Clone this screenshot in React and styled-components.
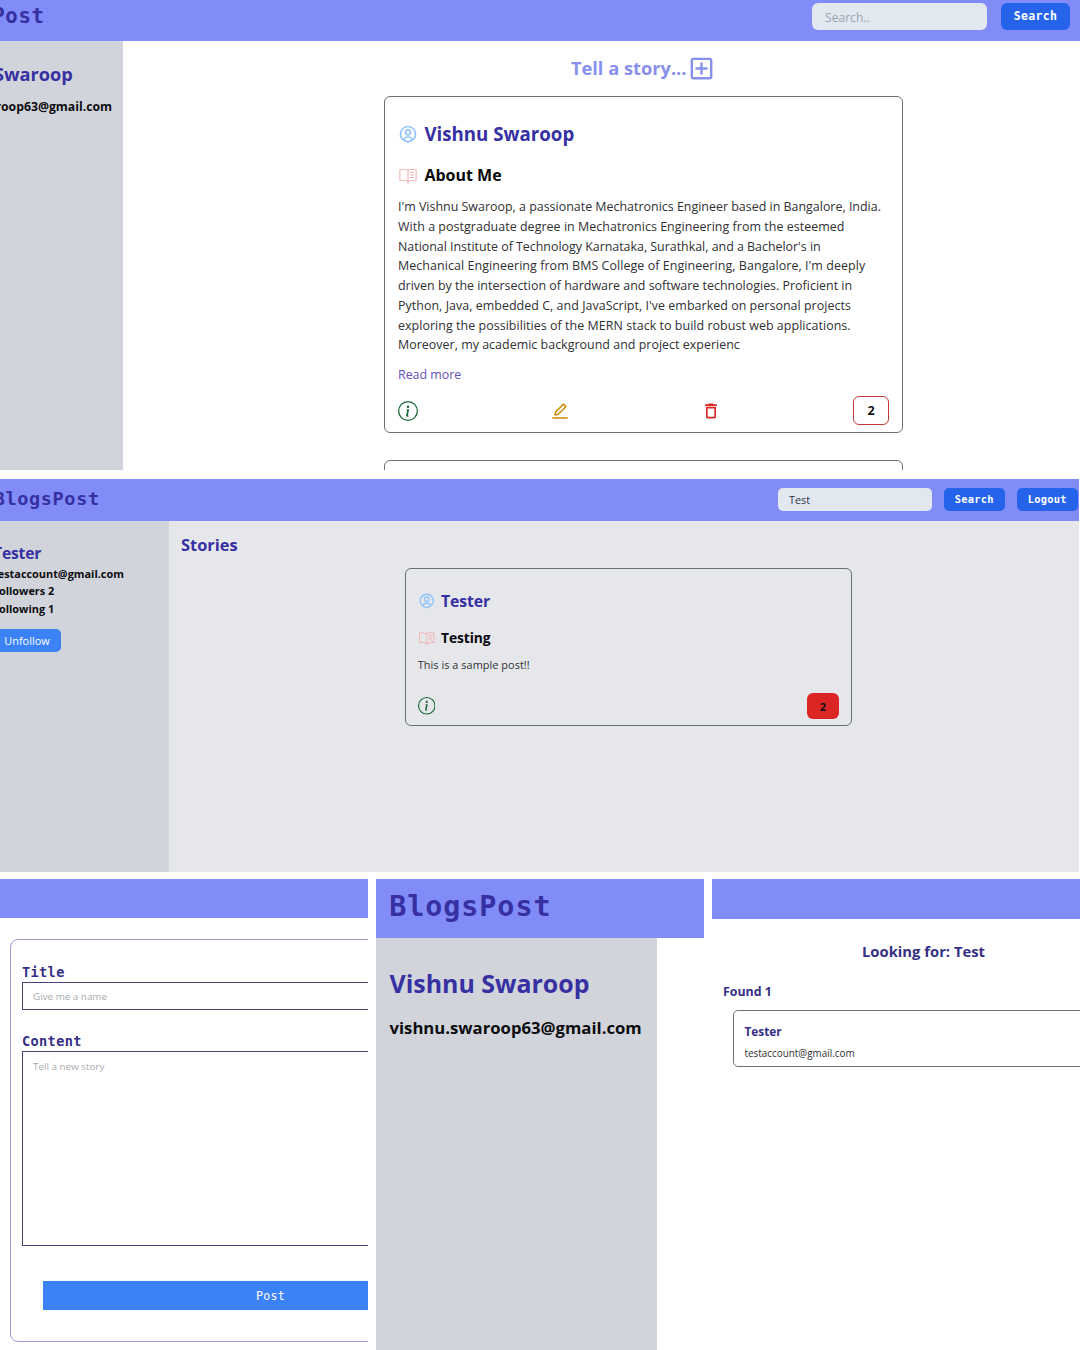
import React from "react";
import styled, { createGlobalStyle, css } from "styled-components";
import { BiUserCircle } from "react-icons/bi";
import { PiBookOpenTextLight } from "react-icons/pi";
import { BsInfoCircle } from "react-icons/bs";
import { AiOutlineEdit } from "react-icons/ai";
import { MdOutlineAddBox, MdOutlineDelete } from "react-icons/md";

const sans = `"Open Sans", "Noto Sans", sans-serif`;
const mono = `"DejaVu Sans Mono", "Liberation Mono", monospace`;

const color = {
  bar: "#818cf8",
  indigo: "#3730a3",
  indigoDark: "#352f85",
  side: "#d1d5db",
  pane: "#e5e7eb",
  blue: "#3b82f6",
  blueDark: "#2563eb",
  line: "#6b7078",
};

const GlobalStyle = createGlobalStyle`
  * { box-sizing: border-box; }
  body { margin: 0; background: #fff; font-family: ${sans}; }
  button, input, textarea { font: inherit; margin: 0; }
`;

const Page = styled.div`
  width: 1080px;
  height: 1350px;
  overflow: hidden;
  display: grid;
  grid-template-rows: 470px 393px 471px;
  row-gap: 9px;
  background: #fff;
`;

const Panel = styled.section`
  display: flex;
  flex-direction: column;
  overflow: hidden;
  min-width: 0;
  width: ${(p) => p.$width || "auto"};
  background: ${(p) => p.$bg || "#fff"};
`;

const BottomRow = styled.div`
  display: grid;
  grid-template-columns: 368px 328px 368px;
  column-gap: 8px;
  margin-top: -2px;
`;

const Bar = styled.header`
  flex: none;
  display: flex;
  align-items: center;
  height: ${(p) => p.$height}px;
  padding: ${(p) => p.$pad || "0"};
  background: ${color.bar};
`;

const Logo = styled.h1`
  margin: 0 auto 0 ${(p) => p.$left}px;
  font: 700 ${(p) => p.$size}px/1 ${mono};
  letter-spacing: ${(p) => p.$spacing}px;
  color: ${color.indigo};
`;

const SearchInput = styled.input`
  width: ${(p) => p.$w}px;
  height: ${(p) => p.$h}px;
  padding: ${(p) => p.$padTop || 0}px ${(p) => p.$padX}px 0;
  border: 0;
  border-radius: ${(p) => p.$radius}px;
  background: #e2e8f0;
  color: #30343c;
  font-size: ${(p) => p.$size}px;
  &::placeholder { color: #9ca3af; opacity: 1; }
`;

const BarButton = styled.button`
  width: ${(p) => p.$w}px;
  height: ${(p) => p.$h}px;
  margin-left: ${(p) => p.$gap}px;
  padding: 0;
  border: 0;
  border-radius: ${(p) => p.$radius}px;
  background: ${color.blueDark};
  color: #fff;
  font: 700 ${(p) => p.$size}px/1 ${mono};
  letter-spacing: ${(p) => p.$spacing || 0}px;
`;

const Body = styled.div`
  flex: 1;
  display: flex;
  min-height: 0;
`;

const Sidebar = styled.aside`
  flex: none;
  width: ${(p) => p.$w}px;
  margin-left: ${(p) => p.$shift || 0}px;
  padding: ${(p) => p.$pad};
  background: ${color.side};
  white-space: nowrap;
`;

const Name = styled.h2`
  margin: 0;
  font-size: ${(p) => p.$size}px;
  line-height: ${(p) => p.$lh}px;
  font-weight: 700;
  letter-spacing: ${(p) => p.$spacing || 0}px;
  color: ${(p) => p.$color || color.indigo};
`;

const Detail = styled.p`
  margin: 0;
  font-size: ${(p) => p.$size}px;
  line-height: ${(p) => p.$lh}px;
  font-weight: 700;
  color: #0c0c0f;
`;

const FollowButton = styled.button`
  display: block;
  width: 68px;
  height: 23px;
  margin-top: 11.5px;
  padding: 0;
  border: 0;
  border-radius: 5px;
  background: ${color.blue};
  color: #fff;
  font-size: 10.9px;
  line-height: 23px;
`;

const Main = styled.main`
  flex: none;
  display: flex;
  flex-direction: column;
  align-items: center;
  width: ${(p) => p.$w}px;
  background: ${(p) => p.$bg || "#fff"};
`;

const StoryLink = styled.a`
  display: flex;
  align-items: center;
  height: 30px;
  margin: 13px 0 13.5px;
  color: #8890ee;
  font-size: 18.25px;
  font-weight: 700;
  line-height: 28px;
  svg { margin-left: 0.5px; }
`;

const StoriesTitle = styled.h2`
  align-self: flex-start;
  margin: 11px 0 11px 12px;
  font-size: 16.4px;
  line-height: 25px;
  font-weight: 700;
  color: ${color.indigo};
`;

const Card = styled.article`
  flex: none;
  display: flex;
  flex-direction: column;
  width: ${(p) => p.$w}px;
  height: ${(p) => p.$h}px;
  padding: ${(p) => p.$pad || "0"};
  border: 1.5px solid ${color.line};
  border-radius: 6px;
  & + & { margin-top: 27px; }
`;

const IconLine = styled.div`
  display: flex;
  align-items: center;
  gap: ${(p) => p.$gap}px;
  height: ${(p) => p.$h}px;
  margin-bottom: ${(p) => p.$mb || 0}px;
  svg { flex: none; }
`;

const Excerpt = styled.p`
  margin: 0;
  font-size: ${(p) => p.$size}px;
  line-height: ${(p) => p.$lh}px;
  letter-spacing: ${(p) => p.$spacing || 0}px;
  color: #303034;
  white-space: nowrap;
`;

const Line = styled.span`
  display: block;
  letter-spacing: ${(p) => p.$tracking || 0}px;
`;

const ReadMore = styled.a`
  margin-top: 9.5px;
  font-size: 12.4px;
  line-height: 20px;
  color: #5f52b8;
`;

const Actions = styled.div`
  display: flex;
  align-items: center;
  justify-content: space-between;
  margin-top: auto;
`;

const Likes = styled.button`
  width: ${(p) => p.$w}px;
  height: ${(p) => p.$h}px;
  padding: 2px 0 0;
  border-radius: 6px;
  font-size: ${(p) => p.$size}px;
  font-weight: 700;
  line-height: 1;
  color: #111;
  ${(p) =>
    p.$liked
      ? css`border: 0; background: #dc2626;`
      : css`border: 1.5px solid #c53a3a; background: #fff;`}
`;

const Form = styled.form`
  display: flex;
  flex-direction: column;
  flex: none;
  width: 519px;
  height: 403px;
  margin: 21px 0 0 10px;
  padding: 22px 11px 0 11px;
  border: 1px solid #9a9ccf;
  border-radius: 8px;
`;

const Label = styled.label`
  font: 700 13.6px/20px ${mono};
  letter-spacing: 0.35px;
  color: ${color.indigoDark};
`;

const fieldStyle = css`
  display: block;
  width: 100%;
  border: 1px solid #4a4378;
  border-radius: 0;
  outline: 0;
  resize: none;
  font-size: 9.85px;
  background: #fff;
  &::placeholder { color: #a9abb0; opacity: 1; }
`;

const TextInput = styled.input`
  ${fieldStyle}
  height: 28px;
  margin-bottom: 21px;
  padding: 0 10px 1px;
`;

const TextArea = styled.textarea`
  ${fieldStyle}
  height: 195px;
  padding: 7px 10px;
  line-height: 15px;
`;

const PostButton = styled.button`
  height: 29px;
  margin: 35px 21px 0;
  padding: 1px 0 0 2px;
  border: 0;
  background: ${color.blue};
  color: #fff;
  font: 400 11.6px/28px ${mono};
  letter-spacing: 0.25px;
`;

const Results = styled.div`
  width: 423px;
  padding: 21px 0 0 11px;
`;

const ResultsTitle = styled.h2`
  margin: 0 11px 20px 0;
  text-align: center;
  font-size: 14.8px;
  line-height: 22px;
  color: ${color.indigoDark};
`;

const Found = styled.h3`
  margin: 0 0 8px;
  font-size: 12.4px;
  line-height: 20px;
  color: ${color.indigoDark};
`;

const ResultCard = styled.div`
  height: 57px;
  margin: 0 21px 0 10px;
  padding: 10px 11px 0 10.5px;
  border: 1px solid ${color.line};
  border-radius: 5px;
`;

function PostCard({ compact, author, title, lines, more, owner, likes, liked }) {
  const icon = compact ? 17.5 : 20;
  return (
    <Card
      $w={compact ? 447 : 519}
      $h={compact ? 158 : 337}
      $pad={compact ? "18px 12px 6px 12px" : "23px 13px 7px 13px"}
    >
      <IconLine $gap={compact ? 5.8 : 6.4} $h={28} $mb={compact ? 9 : 13}>
        <BiUserCircle size={icon} color="#93c5fd" />
        <Name $size={compact ? 15.8 : 18.7} $lh={28} $spacing={compact ? -0.1 : 0}>{author}</Name>
      </IconLine>
      <IconLine $gap={compact ? 5.8 : 6.4} $h={28} $mb={compact ? 4 : 8}>
        <PiBookOpenTextLight size={icon} color="#f5a9a9" />
        <Name $size={compact ? 13.8 : 16} $lh={28} $color="#08080a" $spacing={compact ? -0.08 : 0}>
          {title}
        </Name>
      </IconLine>
      <Excerpt $size={compact ? 10.9 : 12.44} $lh={compact ? 18 : 19.76}>
        {lines.map(([line, tracking]) => (
          <Line key={line} $tracking={tracking}>{line}</Line>
        ))}
      </Excerpt>
      {more && <ReadMore>Read more</ReadMore>}
      <Actions>
        <BsInfoCircle size={compact ? 17.5 : 20} color="#166534" />
        {owner && <AiOutlineEdit size={20} color="#ca8a04" />}
        {owner && <MdOutlineDelete size={20} color="#dc2626" />}
        <Likes
          $liked={liked}
          $w={compact ? 32 : 36}
          $h={compact ? 26 : 29}
          $size={compact ? 10.9 : 12.5}
        >
          {likes}
        </Likes>
      </Actions>
    </Card>
  );
}

const aboutLines = [
  ["I'm Vishnu Swaroop, a passionate Mechatronics Engineer based in Bangalore, India.", 0],
  ["With a postgraduate degree in Mechatronics Engineering from the esteemed", 0.045],
  ["National Institute of Technology Karnataka, Surathkal, and a Bachelor's in", -0.02],
  ["Mechanical Engineering from BMS College of Engineering, Bangalore, I'm deeply", 0.072],
  ["driven by the intersection of hardware and software technologies. Proficient in", 0],
  ["Python, Java, embedded C, and JavaScript, I've embarked on personal projects", 0.04],
  ["exploring the possibilities of the MERN stack to build robust web applications.", 0.05],
  ["Moreover, my academic background and project experienc", 0.02],
];

const sampleLines = [["This is a sample post!!", 0.05]];

function HomePanel() {
  return (
    <Panel>
      <Bar $height={40.5} $pad="0 10px 8px 0">
        <Logo $size={20.7} $spacing={0.68} $left={-73.5}>BlogsPost</Logo>
        <SearchInput $w={175} $h={27} $padX={13} $padTop={2} $radius={6} $size={12.1} placeholder="Search.." />
        <BarButton $w={69} $h={27} $gap={14} $radius={6} $size={11.5} $spacing={0.3}>Search</BarButton>
      </Bar>
      <Body>
        <Sidebar $w={206} $shift={-83} $pad="18.5px 0 0 10px">
          <Name $size={18.2} $lh={30}>Vishnu Swaroop</Name>
          <Detail $size={12.25} $lh={36}>vishnu.swaroop63@gmail.com</Detail>
        </Sidebar>
        <Main $w={1041}>
          <StoryLink>
            Tell a story...
            <MdOutlineAddBox size={29} />
          </StoryLink>
          <PostCard author="Vishnu Swaroop" title="About Me" lines={aboutLines} more owner likes={2} />
          <Card $w={519} $h={337} />
        </Main>
      </Body>
    </Panel>
  );
}

function ProfilePanel() {
  return (
    <Panel $bg={color.pane} $width="1079px">
      <Bar $height={42} $pad="0 1px 1px 0">
        <Logo $size={18.5} $spacing={0.64} $left={-6.3}>BlogsPost</Logo>
        <SearchInput $w={154} $h={23} $padX={11.5} $radius={5} $size={10.8} defaultValue="Test" />
        <BarButton $w={61.5} $h={23} $gap={12} $radius={5} $size={10.4} $spacing={0.23}>Search</BarButton>
        <BarButton $w={61.5} $h={23} $gap={11.5} $radius={5} $size={10.4} $spacing={0.23}>Logout</BarButton>
      </Bar>
      <Body>
        <Sidebar $w={176} $shift={-7} $pad="20px 0 0 0">
          <Name $size={15.7} $lh={24} $spacing={-0.2}>Tester</Name>
          <Detail $size={10.9} $lh={17.4}>testaccount@gmail.com</Detail>
          <Detail $size={10.9} $lh={17.4}>Followers 2</Detail>
          <Detail $size={10.9} $lh={17.4}>Following 1</Detail>
          <FollowButton>Unfollow</FollowButton>
        </Sidebar>
        <Main $w={918.5} $bg={color.pane}>
          <StoriesTitle>Stories</StoriesTitle>
          <PostCard compact author="Tester" title="Testing" lines={sampleLines} likes={2} liked />
        </Main>
      </Body>
    </Panel>
  );
}

function CreatePanel() {
  return (
    <Panel>
      <Bar $height={39} />
      <Form>
        <Label>Title</Label>
        <TextInput placeholder="Give me a name" />
        <Label>Content</Label>
        <TextArea placeholder="Tell a new story" />
        <PostButton type="button">Post</PostButton>
      </Form>
    </Panel>
  );
}

function AccountPanel() {
  return (
    <Panel>
      <Bar $height={59} $pad="0 0 2px">
        <Logo $size={28.4} $spacing={0.92} $left={13.3}>BlogsPost</Logo>
      </Bar>
      <Body>
        <Sidebar $w={281} $pad="25px 0 0 13.5px">
          <Name $size={24.95} $lh={40}>Vishnu Swaroop</Name>
          <Detail $size={16.7} $lh={49}>vishnu.swaroop63@gmail.com</Detail>
        </Sidebar>
      </Body>
    </Panel>
  );
}

function SearchPanel() {
  return (
    <Panel>
      <Bar $height={40} />
      <Results>
        <ResultsTitle>Looking for: Test</ResultsTitle>
        <Found>Found 1</Found>
        <ResultCard>
          <Name $size={11.8} $lh={20} $color={color.indigoDark}>Tester</Name>
          <Excerpt $size={9.9} $lh={24.5}>testaccount@gmail.com</Excerpt>
        </ResultCard>
      </Results>
    </Panel>
  );
}

export default function App() {
  return (
    <>
      <GlobalStyle />
      <Page>
        <HomePanel />
        <ProfilePanel />
        <BottomRow>
          <CreatePanel />
          <AccountPanel />
          <SearchPanel />
        </BottomRow>
      </Page>
    </>
  );
}
